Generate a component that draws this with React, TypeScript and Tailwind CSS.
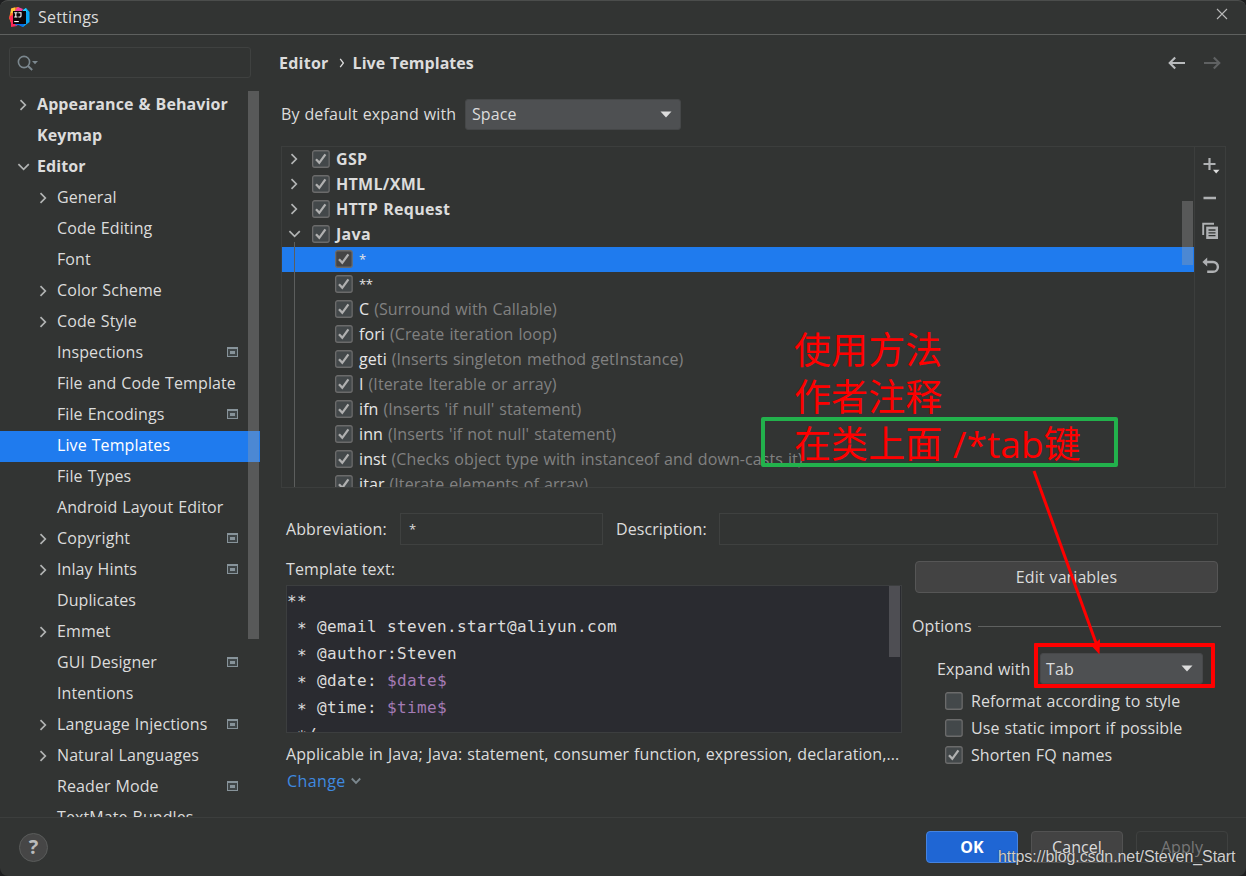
import React from "react";

const ui = "font-['Open_Sans','Noto_Sans_CJK_SC',sans-serif] [word-spacing:0.7px] tracking-[0.09px]";

type NavItem = {
  label: string;
  level: 0 | 1;
  arrow?: "right" | "down";
  project?: boolean;
  selected?: boolean;
};

const nav: NavItem[] = [
  { label: "Appearance & Behavior", level: 0, arrow: "right" },
  { label: "Keymap", level: 0 },
  { label: "Editor", level: 0, arrow: "down" },
  { label: "General", level: 1, arrow: "right" },
  { label: "Code Editing", level: 1 },
  { label: "Font", level: 1 },
  { label: "Color Scheme", level: 1, arrow: "right" },
  { label: "Code Style", level: 1, arrow: "right" },
  { label: "Inspections", level: 1, project: true },
  { label: "File and Code Template", level: 1 },
  { label: "File Encodings", level: 1, project: true },
  { label: "Live Templates", level: 1, selected: true },
  { label: "File Types", level: 1 },
  { label: "Android Layout Editor", level: 1 },
  { label: "Copyright", level: 1, arrow: "right", project: true },
  { label: "Inlay Hints", level: 1, arrow: "right", project: true },
  { label: "Duplicates", level: 1 },
  { label: "Emmet", level: 1, arrow: "right" },
  { label: "GUI Designer", level: 1, project: true },
  { label: "Intentions", level: 1 },
  { label: "Language Injections", level: 1, arrow: "right", project: true },
  { label: "Natural Languages", level: 1, arrow: "right" },
  { label: "Reader Mode", level: 1, project: true },
  { label: "TextMate Bundles", level: 1 },
];

const groups: { label: string; arrow: "right" | "down" }[] = [
  { label: "GSP", arrow: "right" },
  { label: "HTML/XML", arrow: "right" },
  { label: "HTTP Request", arrow: "right" },
  { label: "Java", arrow: "down" },
];

const templates: { key: string; note?: string; selected?: boolean; star?: boolean }[] = [
  { key: "*", selected: true, star: true },
  { key: "**", star: true },
  { key: "C", note: "(Surround with Callable)" },
  { key: "fori", note: "(Create iteration loop)" },
  { key: "geti", note: "(Inserts singleton method getInstance)" },
  { key: "I", note: "(Iterate Iterable or array)" },
  { key: "ifn", note: "(Inserts 'if null' statement)" },
  { key: "inn", note: "(Inserts 'if not null' statement)" },
  { key: "inst", note: "(Checks object type with instanceof and down-casts it)" },
  { key: "itar", note: "(Iterate elements of array)" },
];

function Chevron({ dir }: { dir: "right" | "down" }) {
  return (
    <svg width="14" height="14" viewBox="0 0 14 14" fill="none" stroke="#b2b4b4" strokeWidth="1.7" className="shrink-0">
      {dir === "right" ? <path d="M4.5 2.2 L9.3 7 L4.5 11.8" /> : <path d="M2.4 4.2 L7.6 9.4 L12.8 4.2" />}
    </svg>
  );
}

function ProjectIcon() {
  return (
    <svg width="11" height="10" viewBox="0 0 11 10" className="shrink-0" shapeRendering="crispEdges">
      <rect width="11" height="10" fill="#87939a" />
      <rect x="1" y="2" width="9" height="7" fill="#3f4547" />
      <rect x="3" y="4" width="5" height="3" fill="#87939a" />
    </svg>
  );
}

function Check({ checked = true, warm = false }: { checked?: boolean; warm?: boolean }) {
  return (
    <svg width="18" height="18" viewBox="0 0 18 18" className="shrink-0" fill="none">
      <rect x="0.65" y="0.75" width="16.5" height="16.5" rx="2" fill={warm ? "#454545" : "#43484a"} stroke="#6b6b6b" strokeWidth="1.3" />
      {checked && <path d="M4 9.2 L7.3 12.8 L13.4 4.3" stroke="#b0b0b0" strokeWidth="2.3" />}
    </svg>
  );
}

function Caret() {
  return (
    <svg width="12" height="7" viewBox="0 0 12 7" className="shrink-0">
      <path d="M0.5 0.5 H11.5 L6 6.5 Z" fill="#dcdcdc" />
    </svg>
  );
}

function Logo() {
  return (
    <svg width="21" height="21" viewBox="0 0 21 21" className="shrink-0">
      <path d="M1 7 L3 1 L9 0 L12 3 L9 12 L2 16 L0 11 Z" fill="#fc801d" />
      <path d="M0 10 L5 7 L9 14 L8 19 L2 20 L2 15 Z" fill="#fe2857" />
      <path d="M9 0 L14 2 L12 6 L3 7 Z" fill="#f43fa0" />
      <path d="M2 1.5 L6 0.5 L6 5 L1.5 6.5 Z" fill="#ffc93c" />
      <path d="M13 4 L17 1 L20.5 5 L20.5 15 L14 20 L10 18 Z" fill="#08a6f5" />
      <path d="M7 16 L16 15 L14 20 L10 18 L6 18.5 Z" fill="#0b6fe8" />
      <path d="M14 3 L17 1 L18 5 L14 5 Z" fill="#21d0ff" />
      <rect x="4" y="4" width="13" height="13" fill="#0b0508" />
      <path d="M5.2 5.8 H8.4 M6.8 5.8 V10 M5.2 10 H8.4 M9.4 5.8 H12 V9 Q12 10 10.8 10 H9.4" stroke="#fff" strokeWidth="1.1" fill="none" />
      <rect x="5.2" y="14" width="4.6" height="1.1" fill="#fff" />
    </svg>
  );
}

function NavRow({ item }: { item: NavItem }) {
  return (
    <div
      className={`flex h-[31px] shrink-0 items-center pb-0.5 ${item.selected ? "bg-[#1f7bee] text-white" : ""} ${item.level === 0 ? "pl-4" : "pl-9"}`}
    >
      <span className="flex w-[21px] shrink-0">{item.arrow && <Chevron dir={item.arrow} />}</span>
      <span className={`relative -top-px flex-1 whitespace-nowrap ${item.level === 0 ? "font-bold tracking-[0.1px]" : ""}`}>{item.label}</span>
      {item.project && (
        <span className="mr-[22px] mb-px flex">
          <ProjectIcon />
        </span>
      )}
    </div>
  );
}

function Sidebar() {
  return (
    <aside className="relative flex w-[260px] shrink-0 flex-col">
      <div className="mt-3 ml-[9px] flex h-[31px] w-[242px] shrink-0 items-center rounded-[3px] border-[1.5px] border-[#3f4140] pl-[7px]">
        <svg width="22" height="18" viewBox="0 0 22 18" fill="none" stroke="#7b878e" strokeWidth="1.6">
          <circle cx="7" cy="8" r="5.6" />
          <path d="M11 12 L15.2 16" strokeWidth="1.9" />
          <path d="M15 7 H21 L18 10.2 Z" fill="#7b878e" stroke="none" />
        </svg>
      </div>
      <nav className="mt-3 flex min-h-0 flex-1 flex-col overflow-hidden">
        {nav.map((n) => (
          <NavRow key={n.label} item={n} />
        ))}
      </nav>
      <div className="absolute top-[56px] left-[248px] h-[548px] w-[11px] bg-[#a0a0a0]/35" />
    </aside>
  );
}

function TemplateTree() {
  return (
    <div className="mt-4 ml-px flex h-[342px] w-[945px] shrink-0 border border-[#3c3e3d]">
      <div className="relative flex flex-1 flex-col overflow-hidden">
        {groups.map((g) => (
          <div key={g.label} className="flex h-[25px] shrink-0 items-center pb-px pl-[5px]">
            <Chevron dir={g.arrow} />
            <span className="ml-[11px]">
              <Check />
            </span>
            <span className="relative ml-[6px] font-bold tracking-[0.3px]">{g.label}</span>
          </div>
        ))}
        {templates.map((t) => (
          <div
            key={t.key}
            className={`flex h-[25px] shrink-0 items-center pb-px pl-[53px] whitespace-pre ${t.selected ? "bg-[#1f7bee]" : ""}`}
          >
            <Check warm={t.selected} />
            <span className={`ml-[6px] text-[#e6e6e6] ${t.star ? "text-[13px] tracking-[-0.4px]" : ""}`}>{t.key}</span>
            {t.note && <span className="text-[#818181]"> {t.note}</span>}
          </div>
        ))}
        <div className="absolute top-[95px] bottom-0 left-3 w-px bg-[#5c5e5d]" />
        <div className="absolute top-[54px] right-px h-[64px] w-[11px] bg-[#a0a0a0]/35" />
      </div>
      <div className="flex w-[31px] shrink-0 flex-col items-center border-l border-[#3c3e3d] pl-0.5">
        <svg width="18" height="18" viewBox="0 0 18 18" className="mt-[9px]" fill="none">
          <path d="M7.5 2 V14 M1.5 8 H13.5" stroke="#afb1b3" strokeWidth="2.2" />
          <path d="M11 13.7 H17.5 L14.2 17.4 Z" fill="#dcdcdc" />
        </svg>
        <svg width="18" height="18" viewBox="0 0 18 18" className="mt-4" fill="none">
          <path d="M1.5 8 H14" stroke="#afb1b3" strokeWidth="2.4" />
        </svg>
        <svg width="18" height="18" viewBox="0 0 18 18" className="mt-[14px]" fill="none">
          <path d="M1.2 13 V1.8 H12" stroke="#afb1b3" strokeWidth="1.9" />
          <rect x="4.2" y="4.6" width="11.8" height="12.4" fill="#afb1b3" />
          <path d="M6.5 8 H13.5 M6.5 10.8 H13.5 M6.5 13.6 H13.5" stroke="#323433" strokeWidth="1.3" />
        </svg>
        <svg width="18" height="18" viewBox="0 0 18 18" className="mt-4" fill="none">
          <path d="M4 6 H11 A4.9 4.9 0 0 1 11 15.8 H5.2" stroke="#afb1b3" strokeWidth="2.4" />
          <path d="M0.4 6 L5.2 1.4 V10.4 Z" fill="#afb1b3" />
        </svg>
      </div>
    </div>
  );
}

function Star() {
  return <span className="relative top-[2px]">*</span>;
}

function Editor() {
  return (
    <div className="relative mt-[3px] h-[148px] w-[616px] overflow-hidden border border-[#3c3e3f] bg-[#2a2b30] font-['DejaVu_Sans_Mono',monospace] text-[16px] leading-[27px] tracking-[0.37px] whitespace-pre text-[#dcdcdc] [word-spacing:0]">
      <div>
        <Star />
        <Star />
      </div>
      <div>
        {" "}
        <Star /> @email steven.start@aliyun.com
      </div>
      <div>
        {" "}
        <Star /> @author:Steven
      </div>
      <div>
        {" "}
        <Star />
        {" @date: "}
        <span className="text-[#a47bb5]">$date$</span>
      </div>
      <div>
        {" "}
        <Star />
        {" @time: "}
        <span className="text-[#a47bb5]">$time$</span>
      </div>
      <div>
        {" "}
        <Star />/
      </div>
      <div className="absolute top-0 right-px h-[71px] w-[11px] bg-[#4e4e53]" />
    </div>
  );
}

function Option({ label, checked = false }: { label: string; checked?: boolean }) {
  return (
    <div className="flex h-[27px] items-center">
      <Check checked={checked} />
      <span className="ml-[8px]">{label}</span>
    </div>
  );
}

function Details() {
  return (
    <div className="ml-[6px] flex flex-col">
      <div className="mt-[25px] flex h-[32px] items-center">
        <span className="w-[114px]">Abbreviation:</span>
        <div className="flex h-[32px] w-[203px] items-center border-[1.5px] border-[#3f4140] pl-[8px] text-[13px]">*</div>
        <span className="ml-[13px] w-[103px]">Description:</span>
        <div className="h-[32px] w-[499px] border-[1.5px] border-[#3f4140]" />
      </div>
      <div className="flex">
        <div className="flex w-[616px] flex-col">
          <div className="mt-3 h-[25px] leading-[25px]">Template text:</div>
          <Editor />
          <div className="mt-2 h-[27px] leading-[27px] whitespace-nowrap">
            Applicable in Java; Java: statement, consumer function, expression, declaration,...
          </div>
          <div className="-mt-px flex h-[27px] items-center pl-px tracking-[0.4px] text-[#3f8ae0]">
            Change
            <svg width="10" height="8" viewBox="0 0 10 8" className="ml-[5px]" fill="none" stroke="#7b878e" strokeWidth="1.9">
              <path d="M0.8 1.5 L5 5.8 L9.2 1.5" />
            </svg>
          </div>
        </div>
        <div className="ml-[10px] flex w-[310px] flex-col">
          <div className="mt-4 ml-[3px] flex h-[32px] w-[303px] items-center justify-center rounded-[4px] border border-[#565656] bg-[#434343]">
            Edit variables
          </div>
          <div className="mt-[19px] flex h-[27px] items-center">
            <span className="w-[66px]">Options</span>
            <div className="mt-px h-px w-[243px] bg-[#5f6160]" />
          </div>
          <div className="mt-[14px] flex h-[31px] items-center pl-[25px]">
            <span className="w-[103px] whitespace-nowrap">Expand with</span>
            <div className="flex h-[31px] w-[163px] items-center justify-between rounded-[3px] border-[1.5px] border-[#47484a] bg-[#4e5052] pr-[9px] pl-[5px]">
              <span>Tab</span>
              <Caret />
            </div>
          </div>
          <div className="mt-[3px] ml-[33px] flex flex-col">
            <Option label="Reformat according to style" />
            <Option label="Use static import if possible" />
            <Option label="Shorten FQ names" checked />
          </div>
        </div>
      </div>
    </div>
  );
}

function Annotations() {
  return (
    <div className="pointer-events-none absolute inset-0">
      <div className="absolute top-[325px] left-[794px] font-['Open_Sans','Noto_Sans_CJK_SC',sans-serif] text-[37px] leading-[47px] font-normal tracking-[0.1px] whitespace-pre text-[#ff0000]">
        <div>使用方法</div>
        <div>作者注释</div>
        <div>在类上面 /*tab键</div>
      </div>
      <div className="absolute top-[416px] left-[761px] h-[50px] w-[357px] rounded-[2px] border-4 border-[#22b14c]" />
      <div className="absolute top-[642px] left-[1034px] h-[45px] w-[181px] rounded-[1px] border-4 border-[#ff0000]" />
      <svg className="absolute top-[459px] left-[1020px]" width="100" height="200" viewBox="1020 460 100 200">
        <path d="M1034 471 L1096 643" stroke="#ff0000" strokeWidth="3" />
        <path d="M1099.5 654.5 L1089 643 L1095 643.5 L1100 639 Z" fill="#ff0000" />
      </svg>
      <div className="absolute top-[846px] left-[998px] font-['Liberation_Sans',sans-serif] text-[16px] leading-5 tracking-[-0.08px] whitespace-nowrap text-[#d0d0d0] [text-shadow:0_0_1px_#222]">
        https://blog.csdn.net/Steven_Start
      </div>
    </div>
  );
}

export default function App() {
  return (
    <div className="h-[876px] w-[1246px] overflow-hidden bg-[#1e1f20]">
      <div
        className={`relative flex h-full w-full flex-col overflow-hidden rounded-[8px] border-t border-[#4b4d4c] bg-[#323433] text-[16px] leading-[22px] text-[#dcdcdc] ${ui}`}
      >
        <header className="flex h-[34px] shrink-0 items-center border-b border-[#5e605f] pl-[9px]">
          <Logo />
          <span className="mb-0.5 ml-2 flex-1 tracking-[0.2px]">Settings</span>
          <svg width="12" height="12" viewBox="0 0 12 12" className="mr-[18px] mb-2" stroke="#b8b8b8" strokeWidth="1.1">
            <path d="M1 1 L11 11 M11 1 L1 11" />
          </svg>
        </header>
        <div className="flex min-h-0 flex-1">
          <Sidebar />
          <main className="flex flex-1 flex-col pl-5">
            <div className="mt-4 flex h-6 items-center font-bold">
              <span className="-ml-px tracking-[0.25px]">Editor</span>
              <svg width="6" height="10" viewBox="0 0 6 10" className="mr-[8px] ml-[10px]" fill="none" stroke="#dcdcdc" strokeWidth="1.3">
                <path d="M1.2 0.8 L4.4 5 L1.2 9.2" />
              </svg>
              <span className="flex-1 tracking-[0.03px]">Live Templates</span>
              <svg width="18" height="14" viewBox="0 0 18 14" fill="none" stroke="#b9bbbd" strokeWidth="2.1">
                <path d="M17 7 H2 M7.2 1.4 L1.7 7 L7.2 12.6" />
              </svg>
              <svg width="18" height="14" viewBox="0 0 18 14" className="mr-[25px] ml-[17px]" fill="none" stroke="#5f6162" strokeWidth="2.1">
                <path d="M1 7 H16 M10.8 1.4 L16.3 7 L10.8 12.6" />
              </svg>
            </div>
            <div className="mt-[23px] flex h-[32px] items-center pl-px">
              <span className="w-[184px] whitespace-nowrap">By default expand with</span>
              <div className="flex h-[31px] w-[216px] items-center justify-between rounded-[3px] border-[1.5px] border-[#454748] bg-[#4e5052] pr-[8px] pl-[6px]">
                <span>Space</span>
                <Caret />
              </div>
            </div>
            <TemplateTree />
            <Details />
          </main>
        </div>
        <footer className="flex h-[59px] shrink-0 items-center border-t border-[#3c3e3d] pl-[19px]">
          <div className="flex h-[29px] w-[29px] items-center justify-center rounded-full border border-[#5a5c5b] bg-[#464646] text-[20px] font-bold text-[#b9bbbb]">
            ?
          </div>
          <div className="ml-[878px] flex gap-[13px]">
            <div className="flex h-[32px] w-[92px] items-center justify-center rounded-[4px] border border-[#4583e0] bg-[#1f66d4] font-bold text-white">OK</div>
            <div className="flex h-[32px] w-[92px] items-center justify-center rounded-[4px] border border-[#525252] bg-[#434343]">Cancel</div>
            <div className="flex h-[32px] w-[92px] items-center justify-center rounded-[4px] border border-[#3f4140] text-[#777]">Apply</div>
          </div>
        </footer>
        <Annotations />
      </div>
    </div>
  );
}
